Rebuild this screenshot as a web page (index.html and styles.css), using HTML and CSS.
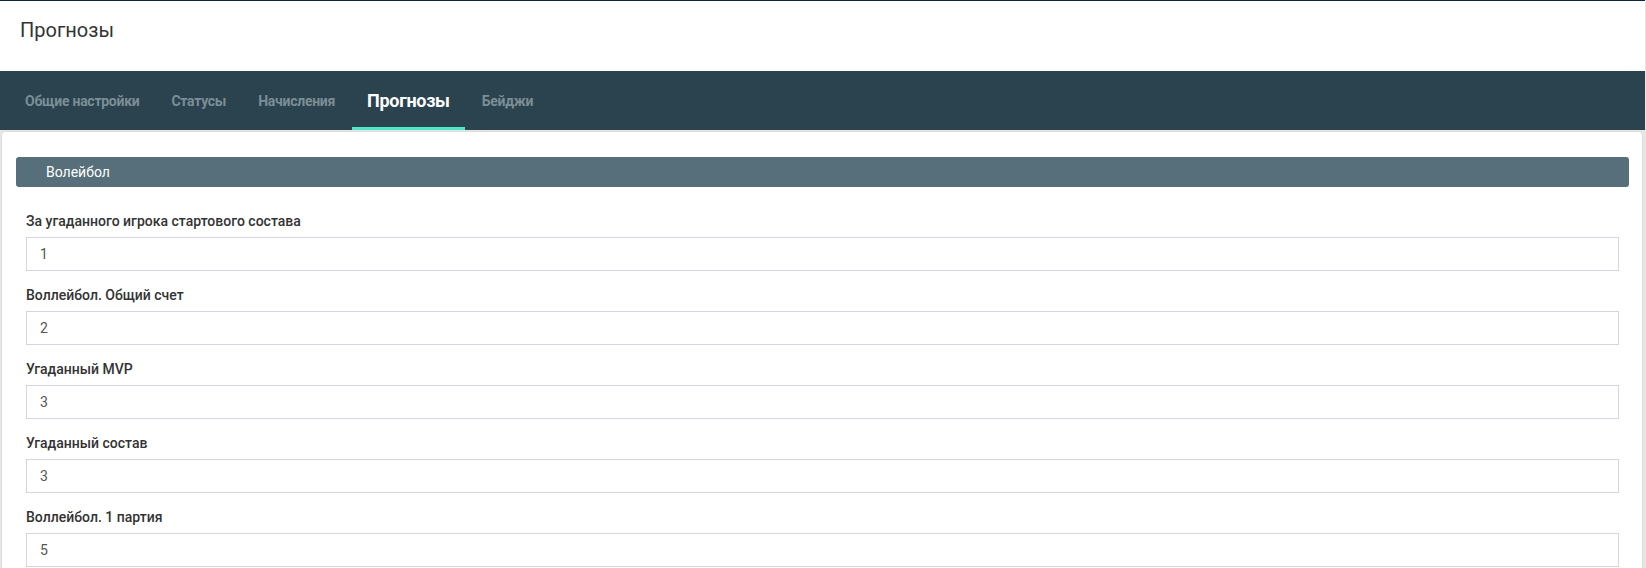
FILE: index.html
```html
<!DOCTYPE html>
<html lang="ru">
<head>
<meta charset="utf-8">
<title>Прогнозы</title>
<link rel="stylesheet" href="styles.css">
</head>
<body>
<div class="page">
  <header class="header">
    <h1 class="header-title">Прогнозы</h1>
  </header>
  <nav class="tabs">
    <a class="tab">Общие настройки</a>
    <a class="tab">Статусы</a>
    <a class="tab">Начисления</a>
    <a class="tab tab-active">Прогнозы</a>
    <a class="tab">Бейджи</a>
  </nav>
  <main class="main">
    <section class="card">
      <div class="section-bar">Волейбол</div>
      <form class="form">
        <div class="field">
          <label class="field-label">За угаданного игрока стартового состава</label>
          <input class="field-input" type="text" value="1">
        </div>
        <div class="field">
          <label class="field-label">Воллейбол. Общий счет</label>
          <input class="field-input" type="text" value="2">
        </div>
        <div class="field">
          <label class="field-label">Угаданный MVP</label>
          <input class="field-input" type="text" value="3">
        </div>
        <div class="field">
          <label class="field-label">Угаданный состав</label>
          <input class="field-input" type="text" value="3">
        </div>
        <div class="field">
          <label class="field-label">Воллейбол. 1 партия</label>
          <input class="field-input" type="text" value="5">
        </div>
      </form>
    </section>
  </main>
</div>
</body>
</html>
```

FILE: styles.css
```css
* {
  box-sizing: border-box;
}

html, body {
  margin: 0;
  padding: 0;
}

body {
  background: #e6e6e6;
  font-family: Roboto, "Liberation Sans", Arial, sans-serif;
  color: #333;
  overflow: hidden;
}

.page {
  width: 1645px;
  border-top: 1px solid #0b2546;
  min-height: 567px;
  background: #e6e6e6;
}

.header {
  height: 70px;
  background: #fff;
  padding: 17px 20px 0;
}

.header-title {
  margin: 0;
  font-size: 20px;
  line-height: 24px;
  font-weight: 400;
  color: #333;
}

.tabs {
  height: 59px;
  background: #2b434f;
  display: flex;
  align-items: stretch;
  padding-left: 10px;
  gap: 2px;
}

.tab {
  display: flex;
  align-items: center;
  padding: 3px 15px 0;
  font-size: 14px;
  letter-spacing: -0.27px;
  font-weight: 700;
  color: #7b8e96;
  border-bottom: 3px solid transparent;
  white-space: nowrap;
}

.tab-active {
  color: #fff;
  font-size: 18px;
  letter-spacing: -0.3px;
  border-bottom-color: #4de6c8;
}

.main {
  padding: 1px 2px 0 1px;
}

.card {
  background: #fff;
  border: 1px solid #dcdcdc;
  border-radius: 4px;
  padding: 25px 13px 20px 14px;
  min-height: 460px;
}

.section-bar {
  height: 30px;
  background: #566f7a;
  border-radius: 3px;
  color: #fff;
  font-size: 14px;
  line-height: 30px;
  padding-left: 30px;
}

.form {
  padding: 10px 10px 0;
}

.field {
  display: flex;
  flex-direction: column;
  padding-top: 14px;
}

.field-label {
  font-size: 14px;
  line-height: 20px;
  font-weight: 500;
  color: #333;
  margin-bottom: 6px;
}

.field-input {
  height: 34px;
  border: 1px solid #d5d5df;
  border-radius: 0;
  padding: 0 13px;
  font-family: Roboto, "Liberation Sans", Arial, sans-serif;
  font-size: 14px;
  color: #555;
  background: #fff;
  outline: none;
}
```
